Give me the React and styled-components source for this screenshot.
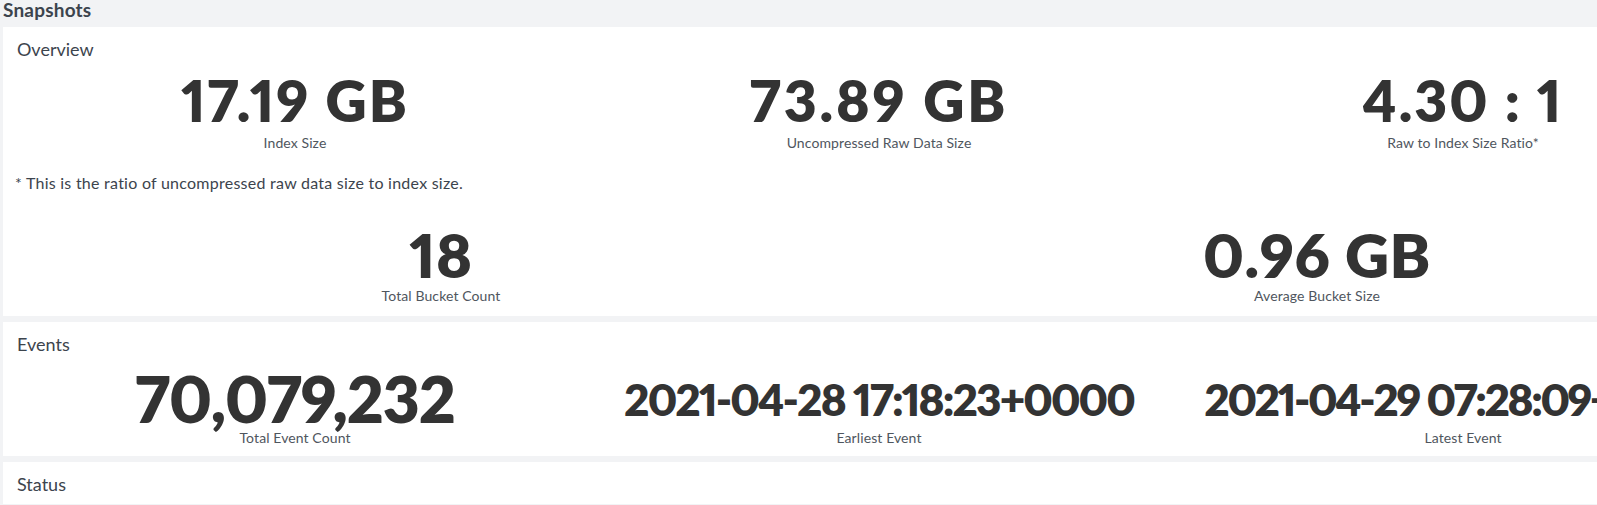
import React from "react";
import styled, { createGlobalStyle } from "styled-components";

const GlobalStyle = createGlobalStyle`
  html, body {
    margin: 0;
    padding: 0;
    overflow: hidden;
    background: #f2f3f5;
  }
  body {
    font-family: Lato, "Open Sans", sans-serif;
    color: #3c444d;
  }
`;

const Page = styled.div`
  width: 1755px;
  padding-bottom: 2px;
`;

const Heading = styled.h2`
  margin: 0;
  height: 27px;
  padding-left: 3px;
  font-size: 19px;
  line-height: 20px;
  letter-spacing: 0.2px;
  font-weight: 700;
  color: #3c444d;
`;

const Panel = styled.section`
  margin: 0 0 6px 3px;
  padding: 11px 0 ${(p) => p.$bottom || 12}px;
  background: #fff;
  &:last-child {
    margin-bottom: 0;
  }
`;

const Title = styled.h3`
  margin: 0;
  padding-left: 14px;
  font-size: 18px;
  line-height: 22px;
  font-weight: 400;
  color: #3c444d;
`;

const Row = styled.div`
  display: grid;
  grid-template-columns: repeat(${(p) => p.$cols}, 1fr);
  margin-top: ${(p) => p.$top || 0}px;
`;

const Single = styled.div`
  display: flex;
  flex-direction: column;
  align-items: center;
  min-width: 0;
`;

const Value = styled.div`
  height: ${(p) => p.$box}px;
  display: flex;
  align-items: center;
  font-size: ${(p) => p.$size}px;
  line-height: 1;
  font-weight: 800;
  color: #333;
  white-space: nowrap;
  font-variant-numeric: proportional-nums;
  letter-spacing: ${(p) => p.$track || 0}px;
`;

const Label = styled.div`
  margin-top: ${(p) => p.$gap || 0}px;
  font-size: 14px;
  line-height: 17px;
  letter-spacing: 0.1px;
  color: #4f565e;
  white-space: nowrap;
`;

const Note = styled.p`
  margin: 23px 0 0;
  padding-left: 12px;
  font-size: 16px;
  line-height: 18px;
  letter-spacing: 0.25px;
  color: #3c444d;
`;

const Stat = ({ value, label, size, box, track, gap }) => (
  <Single>
    <Value $size={size} $box={box} $track={track}>
      {value}
    </Value>
    <Label $gap={gap}>{label}</Label>
  </Single>
);

const overview = [
  { value: "17.19 GB", label: "Index Size" },
  { value: "73.89 GB", label: "Uncompressed Raw Data Size", track: 2.8 },
  { value: "4.30 : 1", label: "Raw to Index Size Ratio*" },
];

const buckets = [
  { value: "18", label: "Total Bucket Count" },
  { value: "0.96 GB", label: "Average Bucket Size" },
];

const events = [
  { value: "70,079,232", label: "Total Event Count", size: 64, track: -1.1 },
  { value: "2021-04-28 17:18:23+0000", label: "Earliest Event", size: 44, track: -1.9 },
  { value: "2021-04-29 07:28:09+0000", label: "Latest Event", size: 44, track: -2.4 },
];

export default function App() {
  return (
    <Page>
      <GlobalStyle />
      <Heading>Snapshots</Heading>

      <Panel>
        <Title>Overview</Title>
        <Row $cols={3} $top={12}>
          {overview.map((s) => (
            <Stat key={s.label} track={2} {...s} size={57} box={57} gap={5} />
          ))}
        </Row>
        <Note>* This is the ratio of uncompressed raw data size to index size.</Note>
        <Row $cols={2} $top={32}>
          {buckets.map((s) => (
            <Stat key={s.label} {...s} size={61} box={61} track={0.5} gap={2} />
          ))}
        </Row>
      </Panel>

      <Panel $bottom={10}>
        <Title>Events</Title>
        <Row $cols={3} $top={12}>
          {events.map((s) => (
            <Stat key={s.label} {...s} box={64} gap={-2} />
          ))}
        </Row>
      </Panel>

      <Panel $bottom={9}>
        <Title>Status</Title>
      </Panel>
    </Page>
  );
}
